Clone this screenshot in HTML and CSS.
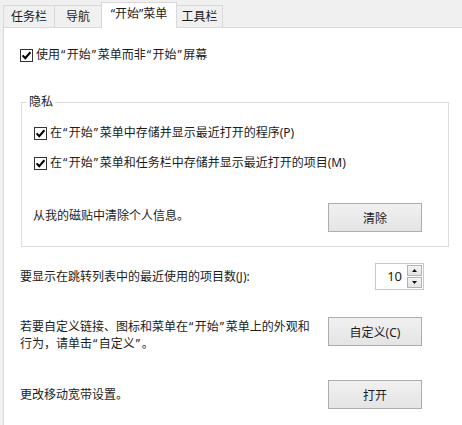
FILE: index.html
```html
<!DOCTYPE html>
<html lang="zh-CN">
<head>
<meta charset="utf-8">
<title>任务栏和导航属性</title>
<link rel="stylesheet" href="styles.css">
</head>
<body>
<div class="tabs">
  <div class="tab">任务栏</div>
  <div class="tab tab-nav">导航</div>
  <div class="tab tab-start active">“开始”菜单</div>
  <div class="tab tab-tools">工具栏</div>
</div>
<div class="panel">
  <label class="check-row">
    <span class="box"><svg viewBox="0 0 11 11" width="11" height="11"><path d="M1.6 5.4 L4.2 8.2 L9.4 2.2" fill="none" stroke="#000" stroke-width="2.1"/></svg></span>
    <span>使用<span class="q">“</span>开始<span class="q">”</span>菜单而非<span class="q">“</span>开始<span class="q">”</span>屏幕</span>
  </label>

  <fieldset class="group">
    <legend>隐私</legend>
    <div class="group-body">
      <label class="check-row">
        <span class="box"><svg viewBox="0 0 11 11" width="11" height="11"><path d="M1.6 5.4 L4.2 8.2 L9.4 2.2" fill="none" stroke="#000" stroke-width="2.1"/></svg></span>
        <span>在<span class="q">“</span>开始<span class="q">”</span>菜单中存储并显示最近打开的程序(P)</span>
      </label>
      <label class="check-row second">
        <span class="box"><svg viewBox="0 0 11 11" width="11" height="11"><path d="M1.6 5.4 L4.2 8.2 L9.4 2.2" fill="none" stroke="#000" stroke-width="2.1"/></svg></span>
        <span>在<span class="q">“</span>开始<span class="q">”</span>菜单和任务栏中存储并显示最近打开的项目(M)</span>
      </label>
      <div class="row clear-row">
        <span class="lift">从我的磁贴中清除个人信息。</span>
        <button class="btn">清除</button>
      </div>
    </div>
  </fieldset>

  <div class="row spin-row">
    <span>要显示在跳转列表中的最近使用的项目数(J):</span>
    <div class="spinner">
      <span class="value">10</span>
      <span class="arrows">
        <span class="arrow"><svg width="5" height="3" viewBox="0 0 5 3"><path d="M0 3 L2.5 0 L5 3 Z" fill="#111"/></svg></span>
        <span class="arrow"><svg width="5" height="3" viewBox="0 0 5 3"><path d="M0 0 L2.5 3 L5 0 Z" fill="#111"/></svg></span>
      </span>
    </div>
  </div>

  <div class="row custom-row">
    <span class="two-line">若要自定义链接、图标和菜单在<span class="q">“</span>开始<span class="q">”</span>菜单上的外观和<br>行为，请单击<span class="q">“</span>自定义<span class="q">”</span>。</span>
    <button class="btn">自定义(C)</button>
  </div>

  <div class="row mobile-row">
    <span>更改移动宽带设置。</span>
    <button class="btn">打开</button>
  </div>
</div>
</body>
</html>
```

FILE: styles.css
```css
* { box-sizing: border-box; }

html, body { margin: 0; padding: 0; }

body {
  width: 462px;
  height: 425px;
  overflow: hidden;
  background: #f0f0f0;
  font-family: "Noto Sans", "Noto Sans CJK SC", sans-serif;
  font-size: 12px;
  line-height: 16px;
  color: #1c1c1c;
}

.tabs {
  display: flex;
  align-items: flex-end;
  height: 27px;
  padding-left: 3px;
  position: relative;
  z-index: 1;
}

.tab {
  width: 52px;
  height: 22px;
  margin-left: -1px;
  border: 1px solid #d9d9d9;
  border-bottom: none;
  background: #f0f0f0;
  display: flex;
  align-items: center;
  justify-content: center;
  padding-top: 1px;
}
.tab:first-child { margin-left: 0; }
.tab-nav { width: 48px; }
.tab-start { width: 76px; }
.tab-tools { width: 47px; }

.tab.active {
  height: 26px;
  margin-bottom: -1px;
  background: #fff;
  position: relative;
  z-index: 2;
  padding-top: 0;
  padding-bottom: 3px;
}

.q {
  padding-left: 1px;
  padding-right: 1.5px;
}

.panel {
  margin-left: 3px;
  height: 398px;
  background: #fff;
  border-left: 1px solid #d9d9d9;
  border-top: 1px solid #d9d9d9;
  padding: 19px 0 0 16px;
  display: flex;
  flex-direction: column;
  align-items: flex-start;
}

.check-row {
  display: flex;
  align-items: center;
  gap: 3px;
  height: 16px;
}

.box {
  width: 13px;
  height: 13px;
  border: 1px solid #333;
  background: #fff;
  display: flex;
  align-items: center;
  justify-content: center;
  flex: none;
}
.box svg { display: block; }

.group {
  margin: 31px 0 0 1px;
  width: 428px;
  border: 1px solid #dcdcdc;
  padding: 0 26px 14px 12px;
  min-width: 0;
}

.group legend {
  margin-left: -7px;
  padding: 0 2px;
  line-height: 16px;
}

.group-body {
  display: flex;
  flex-direction: column;
  align-items: stretch;
}

.group-body .check-row { margin-top: 15px; }
.group-body .check-row.second { margin-top: 14px; }

.row {
  display: flex;
  justify-content: space-between;
  align-items: center;
  width: 402px;
}

.clear-row {
  width: auto;
  margin-top: 32px;
  margin-left: -1px;
}

.lift { padding-bottom: 4px; }

.btn {
  width: 94px;
  height: 29px;
  border: 1px solid #adadad;
  background: linear-gradient(#f1f1f1, #e4e4e4);
  font-family: inherit;
  font-size: 12px;
  color: #1c1c1c;
  padding: 0;
  flex: none;
}

.spin-row {
  margin-top: 16px;
  width: 404px;
}

.spinner {
  width: 49px;
  height: 27px;
  border: 1px solid #c8c8c8;
  background: #fff;
  display: flex;
  align-items: stretch;
}

.spinner .value {
  flex: 1;
  text-align: right;
  padding-right: 5px;
  font-size: 13px;
  line-height: 24px;
}

.arrows {
  width: 16px;
  display: flex;
  flex-direction: column;
  padding: 1px 1px 1px 0;
  gap: 1px;
}

.arrow {
  flex: 1;
  border: 1px solid #b3b3b3;
  background: linear-gradient(#f4f4f4, #e2e2e2);
  display: flex;
  align-items: center;
  justify-content: center;
}
.arrow svg { display: block; }

.custom-row {
  margin-top: 27px;
  align-items: flex-start;
}

.two-line {
  line-height: 17px;
  padding-top: 1px;
}

.mobile-row {
  margin-top: 28px;
}
```
